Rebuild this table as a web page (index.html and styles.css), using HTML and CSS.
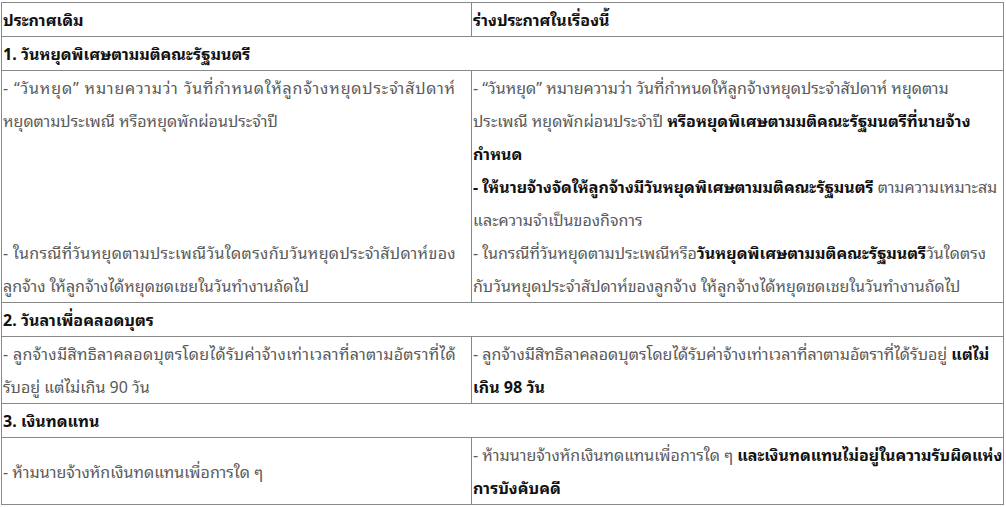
FILE: index.html
```html
<!DOCTYPE html>
<html lang="th">
<head>
<meta charset="utf-8">
<link rel="stylesheet" href="styles.css">
</head>
<body>
<table class="cmp">
  <colgroup><col class="c1"><col class="c2"></colgroup>
  <tr class="head">
    <td><b>ประกาศเดิม</b></td>
    <td><b>ร่างประกาศในเรื่องนี้</b></td>
  </tr>
  <tr class="sec">
    <td colspan="2"><b>1. วันหยุดพิเศษตามมติคณะรัฐมนตรี</b></td>
  </tr>
  <tr>
    <td class="old split">
      <p><span class="ln fit">- “วันหยุด” หมายความว่า วันที่กำหนดให้ลูกจ้างหยุดประจำสัปดาห์</span><span class="ln">หยุดตามประเพณี หรือหยุดพักผ่อนประจำปี</span></p>
      <p><span class="ln fit">- ในกรณีที่วันหยุดตามประเพณีวันใดตรงกับวันหยุดประจำสัปดาห์ของ</span><span class="ln">ลูกจ้าง ให้ลูกจ้างได้หยุดชดเชยในวันทำงานถัดไป</span></p>
    </td>
    <td class="new">
      <p>- “วันหยุด” หมายความว่า วันที่กำหนดให้ลูกจ้างหยุดประจำสัปดาห์ หยุดตาม<br>ประเพณี หยุดพักผ่อนประจำปี <b>หรือหยุดพิเศษตามมติคณะรัฐมนตรีที่นายจ้าง<br>กำหนด</b></p>
      <p><b>- ให้นายจ้างจัดให้ลูกจ้างมีวันหยุดพิเศษตามมติคณะรัฐมนตรี</b> ตามความเหมาะสม<br>และความจำเป็นของกิจการ</p>
      <p>- ในกรณีที่วันหยุดตามประเพณีหรือ<b>วันหยุดพิเศษตามมติคณะรัฐมนตรี</b>วันใดตรง<br>กับวันหยุดประจำสัปดาห์ของลูกจ้าง ให้ลูกจ้างได้หยุดชดเชยในวันทำงานถัดไป</p>
    </td>
  </tr>
  <tr class="sec">
    <td colspan="2"><b>2. วันลาเพื่อคลอดบุตร</b></td>
  </tr>
  <tr>
    <td class="old"><p><span class="ln fit">- ลูกจ้างมีสิทธิลาคลอดบุตรโดยได้รับค่าจ้างเท่าเวลาที่ลาตามอัตราที่ได้</span><span class="ln">รับอยู่ แต่ไม่เกิน 90 วัน</span></p></td>
    <td class="new"><p>- ลูกจ้างมีสิทธิลาคลอดบุตรโดยได้รับค่าจ้างเท่าเวลาที่ลาตามอัตราที่ได้รับอยู่ <b>แต่ไม่<br>เกิน 98 วัน</b></p></td>
  </tr>
  <tr class="sec">
    <td colspan="2"><b>3. เงินทดแทน</b></td>
  </tr>
  <tr>
    <td class="old"><p><span class="ln">- ห้ามนายจ้างหักเงินทดแทนเพื่อการใด ๆ</span></p></td>
    <td class="new"><p>- ห้ามนายจ้างหักเงินทดแทนเพื่อการใด ๆ <b>และเงินทดแทนไม่อยู่ในความรับผิดแห่ง<br>การบังคับคดี</b></p></td>
  </tr>
</table>
<script src="script.js"></script>
</body>
</html>
```

FILE: styles.css
```css
html, body {
  margin: 0;
  padding: 0;
  background: #fff;
}
body {
  padding: 2px 0 0 1px;
  font-family: "Noto Sans Thai Looped", "Loma", "Garuda", Tahoma, "Noto Sans Thai", "DejaVu Sans", sans-serif;
  font-size: 16px;
  line-height: 33px;
  color: #5a5a5a;
}
.cmp {
  border-collapse: collapse;
  width: 1003px;
  table-layout: fixed;
}
.c1 { width: 470px; }
.cmp td {
  border: 1px solid #888;
  padding: 0 2px 0 1px;
  vertical-align: middle;
  white-space: nowrap;
}
.cmp td.old {
  padding-right: 15px;
}
.cmp b {
  color: #111;
  font-weight: bold;
}
.cmp p {
  margin: 0;
}
.ln {
  display: block;
}
.head td, .sec td {
  height: 33px;
}
.split {
  vertical-align: top;
}
.split p + p {
  margin-top: 99px;
}
```

FILE: script.js
```js
(function () {
  var seg = (typeof Intl !== "undefined" && Intl.Segmenter) ? new Intl.Segmenter("th", { granularity: "grapheme" }) : null;
  document.querySelectorAll(".fit").forEach(function (el) {
    var target = el.clientWidth;
    el.style.display = "inline-block";
    var natural = el.getBoundingClientRect().width;
    el.style.display = "";
    var text = el.textContent;
    var n = seg ? Array.from(seg.segment(text)).length : Array.from(text).length;
    if (n > 1 && target > natural) {
      el.style.letterSpacing = ((target - natural) / n).toFixed(3) + "px";
    }
  });
})();
```
